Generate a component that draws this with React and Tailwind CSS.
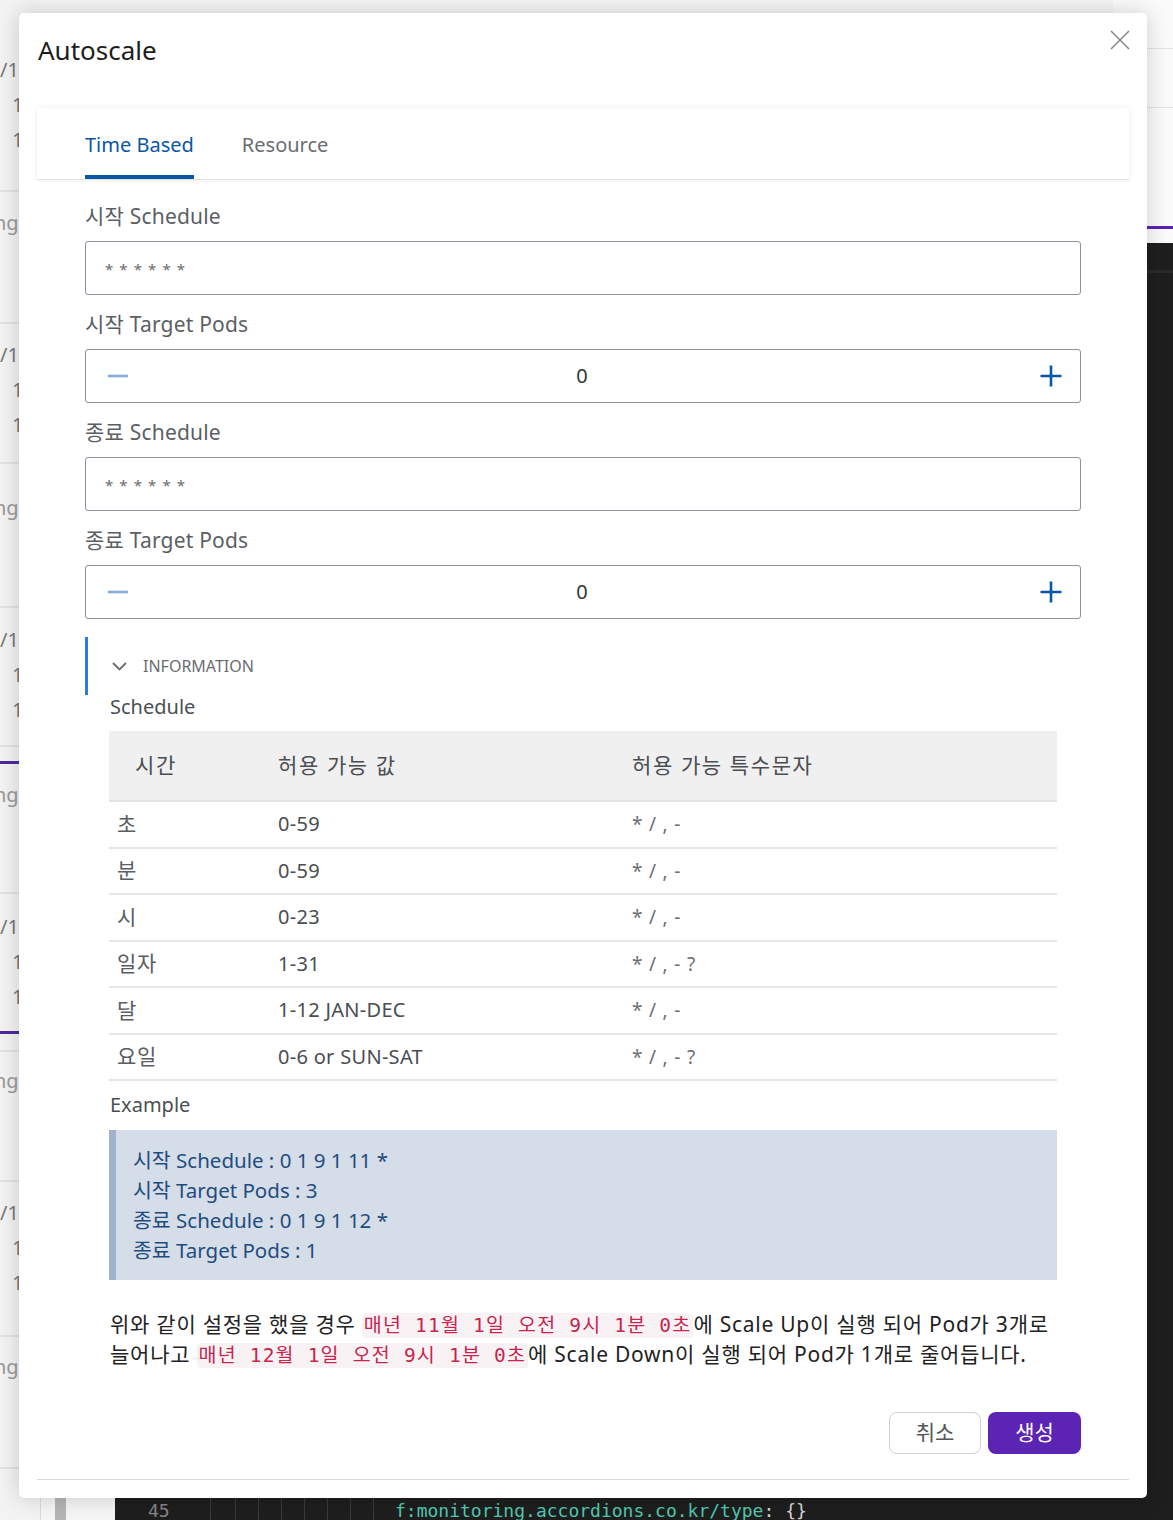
import React from "react";

const rows = [
  ["초", "0-59", "* / , -"],
  ["분", "0-59", "* / , -"],
  ["시", "0-23", "* / , -"],
  ["일자", "1-31", "* / , - ?"],
  ["달", "1-12 JAN-DEC", "* / , -"],
  ["요일", "0-6 or SUN-SAT", "* / , - ?"],
];

function Code({ children }) {
  return (
    <code className="font-['DejaVu_Sans_Mono','Noto_Sans_CJK_KR',monospace] text-[19.5px] leading-[24px] tracking-[1.2px] text-[#c7254e] bg-[#f9f2f4] rounded-[4px] px-[2px] py-[1px] whitespace-pre">
      {children}
    </code>
  );
}

function Minus() {
  return (
    <svg width="22" height="22" viewBox="0 0 22 22">
      <path d="M1 11 H21" stroke="#86acd9" strokeWidth="2.6" />
    </svg>
  );
}

function Plus() {
  return (
    <svg width="22" height="22" viewBox="0 0 22 22">
      <path d="M0.5 11 H21.5 M11 0.5 V21.5" stroke="#0a56a5" strokeWidth="2.6" />
    </svg>
  );
}

function FieldLabel({ children }) {
  return <div className="h-[28px] leading-[28px] text-[21px] tracking-[0.2px] text-[#5b5f64] mb-[11px]">{children}</div>;
}

function TextField() {
  return (
    <div className="h-[54px] border border-[#8c939d] rounded-[3px] flex items-center pl-[19px] pt-[2px] text-[15px] tracking-[1.1px] text-[#6a6d70]">
      * * * * * *
    </div>
  );
}

function StepField() {
  return (
    <div className="h-[54px] border border-[#8c939d] rounded-[3px] flex items-center pl-[21px] pr-[18px]">
      <Minus />
      <span className="flex-1 text-center pr-[5px] text-[20px] text-[#32363a]">0</span>
      <Plus />
    </div>
  );
}

function Background() {
  const leftLines = [190, 322, 462, 606, 745, 892, 1050, 1180, 1335, 1467];
  const slashes = [70, 355, 640, 927, 1213];
  const ones = [105, 140, 390, 425, 675, 710, 962, 997, 1248, 1283];
  const ngo = [225, 510, 797, 1083, 1369];
  return (
    <div className="absolute inset-0">
      <div className="absolute left-0 top-0 w-[40px] h-[1520px] bg-[#f3f3f3]" />
      {leftLines.map((y) => (
        <div key={y} className="absolute left-0 w-[40px] h-[2px] bg-[#e2e2e2]" style={{ top: y }} />
      ))}
      <div className="absolute left-0 top-[761px] w-[40px] h-[3px] bg-[#4c2a9c]" />
      <div className="absolute left-0 top-[1031px] w-[40px] h-[3px] bg-[#4c2a9c]" />
      {slashes.map((y) => (
        <div key={y} className="absolute left-[0px] text-[20px] leading-[20px] text-[#777]" style={{ top: y - 10 }}>/1</div>
      ))}
      {ones.map((y) => (
        <div key={y} className="absolute left-[12px] text-[20px] leading-[20px] text-[#777]" style={{ top: y - 10 }}>1</div>
      ))}
      {ngo.map((y) => (
        <div key={y} className="absolute left-[-6px] text-[20px] leading-[20px] text-[#999]" style={{ top: y - 12 }}>ngo</div>
      ))}
      <div className="absolute right-0 top-0 w-[60px] h-[1520px] bg-[#fafafa]" />
      <div className="absolute right-0 top-[48px] w-[60px] h-[1px] bg-[#e3e3e3]" />
      <div className="absolute right-0 top-[107px] w-[60px] h-[1px] bg-[#e3e3e3]" />
      <div className="absolute right-0 top-[226px] w-[60px] h-[3px] bg-[#5b21b6]" />
      <div className="absolute right-0 top-[243px] w-[60px] h-[1277px] bg-[#1e1e1e]" />
      <div className="absolute right-0 top-[270px] w-[60px] h-[3px] bg-[#2a2a2a]" />
      <div className="absolute left-[115px] top-[1480px] w-[1058px] h-[40px] bg-[#1e1e1e]" />
      <div className="absolute left-[55px] top-[1480px] w-[11px] h-[40px] bg-[#b5b5b5]" />
      <div className="absolute left-[40px] top-[1480px] w-[1px] h-[40px] bg-[#dcdcdc]" />
      {[210, 235, 258, 281, 304, 327, 350, 373].map((x) => (
        <div key={x} className="absolute top-[1498px] w-[1px] h-[22px] bg-[#3a3a3a]" style={{ left: x }} />
      ))}
      <div className="absolute left-[148px] top-[1500px] font-['DejaVu_Sans_Mono',monospace] text-[18px] leading-[22px] text-[#858585]">45</div>
      <div className="absolute left-[395px] top-[1500px] font-['DejaVu_Sans_Mono',monospace] text-[18px] leading-[22px] text-[#4ec9b0] whitespace-pre">
        f:monitoring.accordions.co.kr/type<span className="text-[#d4d4d4]">: {"{}"}</span>
      </div>
    </div>
  );
}

export default function App() {
  return (
    <div className="relative w-[1173px] h-[1520px] overflow-hidden bg-[#f5f5f5] font-['Noto_Sans','Noto_Sans_CJK_KR',sans-serif]">
      <Background />
      <div className="absolute left-[19px] top-[13px] w-[1128px] h-[1485px] bg-white rounded-[5px] shadow-[0_0_22px_rgba(0,0,0,0.18)] flex flex-col">
        <div className="relative h-[95px] pt-[19px] pl-[19px]">
          <h1 className="text-[26px] leading-[36px] text-[#1d1d1d]">Autoscale</h1>
          <button className="absolute right-[16px] top-[16px] w-[22px] h-[22px]" aria-label="close">
            <svg width="22" height="22" viewBox="0 0 22 22">
              <path d="M2 2 L20 20 M20 2 L2 20" stroke="#8a8a8a" strokeWidth="1.6" />
            </svg>
          </button>
        </div>

        <div className="mx-[18px] h-[72px] bg-white border-b border-[#e2e2e2] shadow-[0_0_6px_rgba(0,0,0,0.08)] flex pl-[48px] gap-[48px]">
          <div className="h-full pt-[6px] border-b-[4px] border-[#0a56a5] flex items-center text-[20px] text-[#0a56a5]">
            Time Based
          </div>
          <div className="h-full pt-[6px] border-b-[4px] border-transparent flex items-center text-[20px] text-[#6a6d70]">
            Resource
          </div>
        </div>

        <div className="px-[66px] pt-[22px] flex flex-col">
          <FieldLabel>시작 Schedule</FieldLabel>
          <TextField />
          <div className="h-[15px]" />
          <FieldLabel>시작 Target Pods</FieldLabel>
          <StepField />
          <div className="h-[15px]" />
          <FieldLabel>종료 Schedule</FieldLabel>
          <TextField />
          <div className="h-[15px]" />
          <FieldLabel>종료 Target Pods</FieldLabel>
          <StepField />

          <div className="mt-[18px] h-[58px] border-l-[3px] border-[#2a7be4] flex items-center pl-[24px] gap-[16px]">
            <svg width="15" height="9" viewBox="0 0 15 9">
              <path d="M1 1 L7.5 7.5 L14 1" stroke="#6a6d70" strokeWidth="1.8" fill="none" />
            </svg>
            <span className="text-[16px] text-[#6a6d70]">INFORMATION</span>
          </div>

          <div className="mx-[24px] flex flex-col">
            <div className="h-[24px] leading-[24px] text-[20px] text-[#4b4f54] mb-[12px] pl-[1px]">Schedule</div>
            <div className="flex flex-col">
              <div className="h-[71px] bg-[#f0f0f0] border-b-[2px] border-[#e3e3e3] grid grid-cols-[169px_354px_1fr] items-center text-[21px] tracking-[1.6px] text-[#4a4d52]">
                <div className="pl-[26px]">시간</div>
                <div>허용 가능 값</div>
                <div>허용 가능 특수문자</div>
              </div>
              {rows.map((r) => (
                <div key={r[0]} className="h-[46.5px] border-b-[2px] border-[#e6e6e6] grid grid-cols-[169px_354px_1fr] items-center text-[20px] tracking-[0.3px] text-[#4a4d52]">
                  <div className="pl-[8px] text-[21px] tracking-[0.8px] text-[#5a5d62]">{r[0]}</div>
                  <div>{r[1]}</div>
                  <div className="text-[19px] tracking-[0.8px] text-[#6b6e72]">{r[2]}</div>
                </div>
              ))}
            </div>
            <div className="mt-[12px] h-[24px] leading-[24px] text-[20px] text-[#4b4f54] mb-[13px] pl-[1px]">Example</div>
            <div className="h-[150px] border-l-[7px] border-[#9fb3ca] bg-[#d5dde8] pl-[17px] py-[15px] text-[20.5px] leading-[30px] text-[#1f4c7f]">
              <div>시작 Schedule : 0 1 9 1 11 *</div>
              <div>시작 Target Pods : 3</div>
              <div>종료 Schedule : 0 1 9 1 12 *</div>
              <div>종료 Target Pods : 1</div>
            </div>
            <div className="mt-[29px] pl-[1px] text-[21px] tracking-[0.75px] leading-[30px] text-[#222] whitespace-nowrap">
              위와 같이 설정을 했을 경우 <Code>매년 11월 1일 오전 9시 1분 0초</Code>에 Scale Up이 실행 되어 Pod가 3개로
              <br />
              늘어나고 <Code>매년 12월 1일 오전 9시 1분 0초</Code>에 Scale Down이 실행 되어 Pod가 1개로 줄어듭니다.
            </div>
          </div>

          <div className="mt-[43px] flex justify-end gap-[7px]">
            <button className="w-[92px] h-[42px] border border-[#d2d2d2] rounded-[8px] bg-white text-[21px] text-[#555]">취소</button>
            <button className="w-[93px] h-[42px] rounded-[8px] bg-[#5b24b4] text-[21px] text-white">생성</button>
          </div>
        </div>

        <div className="mx-[18px] mt-[25px] h-[1px] bg-[#d9d9d9]" />
      </div>
    </div>
  );
}
